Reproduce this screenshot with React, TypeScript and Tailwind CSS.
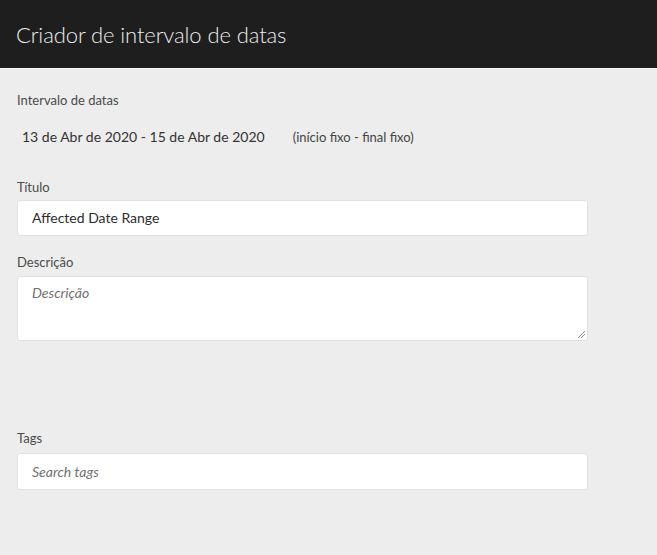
import * as React from 'react';

function Label({ children }: { children: React.ReactNode }) {
  return <div className="text-[13px] leading-[16px] text-[#4b4b4b]">{children}</div>;
}

export default function App() {
  return (
    <div className="w-[657px] h-[555px] bg-[#ededed] font-['Lato',sans-serif] overflow-hidden">
      <header className="h-[69px] bg-[#1e1e1e] flex items-center px-4 border-b border-[#f7f7f7]">
        <h1 className="text-[22px] font-light text-[#ececec] tracking-[-0.1px] mt-[1px]">Criador de intervalo de datas</h1>
      </header>

      <div className="pl-[17px] w-[588px]">
        <div className="mt-[23px]">
          <Label>Intervalo de datas</Label>
        </div>
        <div className="flex items-baseline mt-[18px] pl-[5px]">
          <span className="text-[14px] text-[#333]">13 de Abr de 2020 - 15 de Abr de 2020</span>
          <span className="ml-[28px] text-[13px] text-[#444]">(início fixo - final fixo)</span>
        </div>

        <div className="mt-[31px]">
          <Label>Título</Label>
          <div className="mt-[5px] h-[36px] bg-white border border-[#e1e1e1] rounded-[3px] flex items-center px-[14px] text-[14px] text-[#2c2c2c]">
            Affected Date Range
          </div>
        </div>

        <div className="mt-[18px]">
          <Label>Descrição</Label>
          <div className="relative mt-[6px] h-[65px] bg-white border border-[#e1e1e1] rounded-[3px] px-[14px] pt-[5px] text-[14px] italic text-[#707070]">
            Descrição
            <svg className="absolute right-[1px] bottom-[1px]" width="10" height="10" viewBox="0 0 10 10">
              <path d="M9 2 L2 9 M9 5 L5 9" stroke="#8a8a8a" strokeWidth="1" fill="none" />
            </svg>
          </div>
        </div>

        <div className="mt-[89px]">
          <Label>Tags</Label>
          <div className="mt-[7px] h-[37px] bg-white border border-[#e1e1e1] rounded-[3px] flex items-center px-[14px] text-[14px] italic text-[#707070]">
            Search tags
          </div>
        </div>
      </div>
    </div>
  );
}
